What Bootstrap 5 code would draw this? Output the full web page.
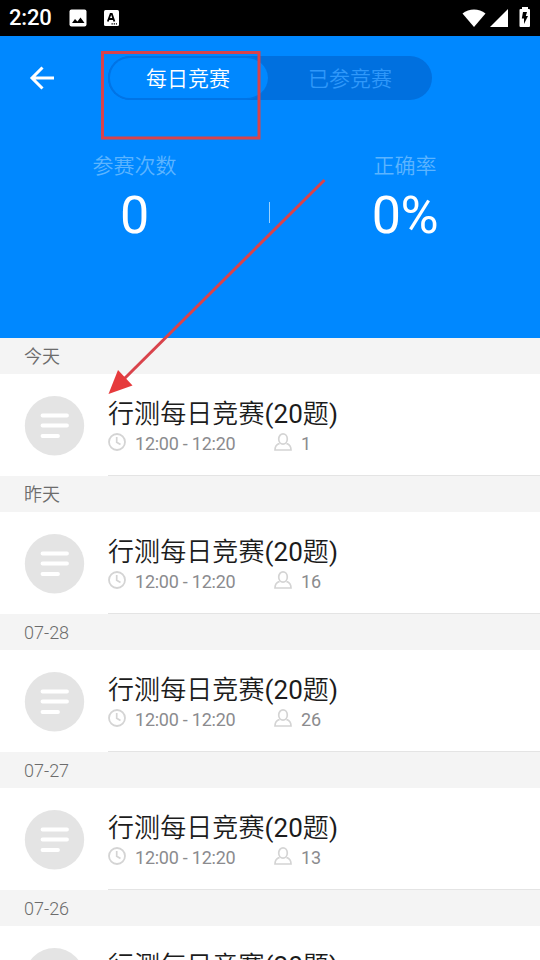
<!DOCTYPE html>
<html lang="zh-CN">
<head>
<meta charset="utf-8">
<meta name="viewport" content="width=device-width, initial-scale=1">
<title>每日竞赛</title>
<link href="https://cdn.jsdelivr.net/npm/bootstrap@5.3.0/dist/css/bootstrap.min.css" rel="stylesheet">
<style>
body{font-family:Roboto,"Noto Sans CJK SC",sans-serif;font-weight:350;width:540px;height:960px;overflow:hidden;color:#1c1c1c}
svg{display:block;flex:none}
.status-bar{height:36px;background:#000;padding:0 9px 0 9px}
.clock{font-size:22px;font-weight:500;line-height:38px;width:60px;letter-spacing:-.2px}
.hero{height:302px;background:#0088ff;padding-top:20px}
.hero-top{height:44px;padding-left:29px}
.switcher{width:324px;height:44px;background:#0070df;margin-left:53px;font-size:21px;line-height:46px}
.switcher .active-tab{width:160px;height:44px;border:2px solid #0074e6;border-right:0;background:#0088ff;line-height:43px;color:#fff;padding-right:2px}
.switcher .other-tab{color:#2f98fa;width:164px}
.stats{margin-top:51px}
.stat{width:269px}
.stat-label{font-size:21px;line-height:30px;color:#5cb4ff}
.stat-value{font-size:52px;line-height:60px;margin-top:5px;font-weight:400}
.rate{padding-left:1px}
.rate .stat-value{letter-spacing:-.5px}
.rule{width:1px;height:21px;background:#99d2ff;margin-top:51px}
.day{height:36px;background:#f4f4f4;padding-left:24px;font-size:18px;line-height:37px;color:#6c6c6c}
.contest{height:102px;padding-left:24px;background:#fff}
.icon-doc{margin-top:22px}
.contest-body{margin-left:23px;border-bottom:1px solid #e4e4e4;padding-top:23px}
.contest-title{font-size:26px;line-height:34px;letter-spacing:.08px}
.meta{font-size:18px;line-height:22px;color:#8b8b8e;margin-top:2px;font-weight:400}
.meta svg{margin-top:-4px}
.period{width:148px;padding-left:9px;letter-spacing:-.24px}
.people{padding-left:9px}
.annotation{left:0;top:0;pointer-events:none}
</style>
</head>
<body class="position-relative bg-white">
<svg width="0" height="0" class="position-absolute">
<symbol id="doc" viewBox="0 0 61 60"><circle cx="30.500" cy="29.700" r="29.700" fill="#e4e4e4"/><path d="M18.500 19.500H43M18.500 29.500H43M18.500 40H34" stroke="#fff" stroke-width="3.800" stroke-linecap="round"/></symbol>
<symbol id="time" viewBox="0 0 18 18"><circle cx="9" cy="9" r="8" fill="none" stroke="#d4d4d4" stroke-width="1.800"/><path d="M8.700 4V9.300L12.500 11.500" fill="none" stroke="#d4d4d4" stroke-width="1.700"/></symbol>
<symbol id="person" viewBox="0 0 18 18"><path d="M5.500 10.800H4.500Q1 12.500 1 17H17Q17 12.500 13.500 10.800H12.500" fill="none" stroke="#d4d4d4" stroke-width="1.700"/><ellipse cx="9" cy="6" rx="4.300" ry="5.100" fill="#fff" stroke="#d4d4d4" stroke-width="1.700"/></symbol>
</svg>

<div class="status-bar d-flex align-items-center text-white">
<span class="clock">2:20</span>
<svg width="18" height="18" viewBox="0 0 18 18"><rect x=".5" y=".5" width="17" height="17" rx="2" fill="#fff"/><path d="M3 14L6 10L8.500 12.500L11.500 8.500L15.500 14Z" fill="#000"/></svg>
<svg class="ms-3" width="16" height="16" viewBox="0 0 16 16"><rect x="1" width="15" height="16" rx="1.500" fill="#fff"/><path d="M4.800 11.500L7.600 4H8.800L11.400 11.500M5.800 9H10.400" fill="none" stroke="#000" stroke-width="1.800"/><path d="M8.500 13.800H14" stroke="#000" stroke-width="1.300" stroke-dasharray="1.300 .9"/></svg>
<div class="d-flex align-items-center ms-auto">
<svg width="24" height="18" viewBox="0 0 24 18"><path d="M.5 4.500C7 -1 17 -1 23.500 4.500L12 18Z" fill="#fff"/></svg>
<svg class="ms-1" width="18" height="18" viewBox="0 0 18 18"><path d="M0 18L18 0V18Z" fill="#fff"/></svg>
<svg width="23" height="22" viewBox="0 1 23 22"><path d="M14 3V1H20V3H21Q22 3 22 4V20Q22 21 21 21H12.500Q11.500 21 11.500 20V4Q11.500 3 12.500 3Z" fill="#fff"/><path d="M15 6H19L17.800 10H20L16 18V12.500H13.800Z" fill="#000"/></svg>
</div>
</div>

<header class="hero text-white">
<div class="hero-top d-flex align-items-center">
<svg width="26" height="26" viewBox="0 0 26 26"><path d="M13.500 2.500L3 13L13.500 23.500M3 13H25" fill="none" stroke="#fff" stroke-width="3"/></svg>
<div class="switcher d-flex rounded-pill text-center">
<div class="active-tab rounded-pill">每日竞赛</div>
<div class="other-tab">已参竞赛</div>
</div>
</div>
<div class="stats d-flex text-center">
<div class="stat"><div class="stat-label">参赛次数</div><div class="stat-value">0</div></div>
<div class="rule"></div>
<div class="stat rate"><div class="stat-label">正确率</div><div class="stat-value">0%</div></div>
</div>
</header>

<main>
<div class="day">今天</div>
<div class="contest d-flex"><svg class="icon-doc" width="61" height="60"><use href="#doc"/></svg><div class="contest-body flex-grow-1"><div class="contest-title">行测每日竞赛<span class="fw-normal">(20</span>题<span class="fw-normal">)</span></div><div class="meta d-flex align-items-center"><svg width="18" height="18"><use href="#time"/></svg><span class="period">12:00 - 12:20</span><svg width="18" height="18"><use href="#person"/></svg><span class="people">1</span></div></div></div>
<div class="day">昨天</div>
<div class="contest d-flex"><svg class="icon-doc" width="61" height="60"><use href="#doc"/></svg><div class="contest-body flex-grow-1"><div class="contest-title">行测每日竞赛<span class="fw-normal">(20</span>题<span class="fw-normal">)</span></div><div class="meta d-flex align-items-center"><svg width="18" height="18"><use href="#time"/></svg><span class="period">12:00 - 12:20</span><svg width="18" height="18"><use href="#person"/></svg><span class="people">16</span></div></div></div>
<div class="day">07-28</div>
<div class="contest d-flex"><svg class="icon-doc" width="61" height="60"><use href="#doc"/></svg><div class="contest-body flex-grow-1"><div class="contest-title">行测每日竞赛<span class="fw-normal">(20</span>题<span class="fw-normal">)</span></div><div class="meta d-flex align-items-center"><svg width="18" height="18"><use href="#time"/></svg><span class="period">12:00 - 12:20</span><svg width="18" height="18"><use href="#person"/></svg><span class="people">26</span></div></div></div>
<div class="day">07-27</div>
<div class="contest d-flex"><svg class="icon-doc" width="61" height="60"><use href="#doc"/></svg><div class="contest-body flex-grow-1"><div class="contest-title">行测每日竞赛<span class="fw-normal">(20</span>题<span class="fw-normal">)</span></div><div class="meta d-flex align-items-center"><svg width="18" height="18"><use href="#time"/></svg><span class="period">12:00 - 12:20</span><svg width="18" height="18"><use href="#person"/></svg><span class="people">13</span></div></div></div>
<div class="day">07-26</div>
<div class="contest d-flex"><svg class="icon-doc" width="61" height="60"><use href="#doc"/></svg><div class="contest-body flex-grow-1"><div class="contest-title">行测每日竞赛<span class="fw-normal">(20</span>题<span class="fw-normal">)</span></div></div></div>
</main>

<svg class="annotation position-absolute" width="540" height="400" viewBox="0 0 540 400"><rect x="102.500" y="52.500" width="156.500" height="85.500" fill="none" stroke="#d9434b" stroke-width="3"/><path d="M324.500 180L121 382" stroke="#d9434b" stroke-width="3"/><path d="M108.500 394L118 370L132.500 385.500Z" fill="#e63a3c"/></svg>
<script src="https://cdn.jsdelivr.net/npm/bootstrap@5.3.0/dist/js/bootstrap.bundle.min.js"></script>
</body>
</html>
